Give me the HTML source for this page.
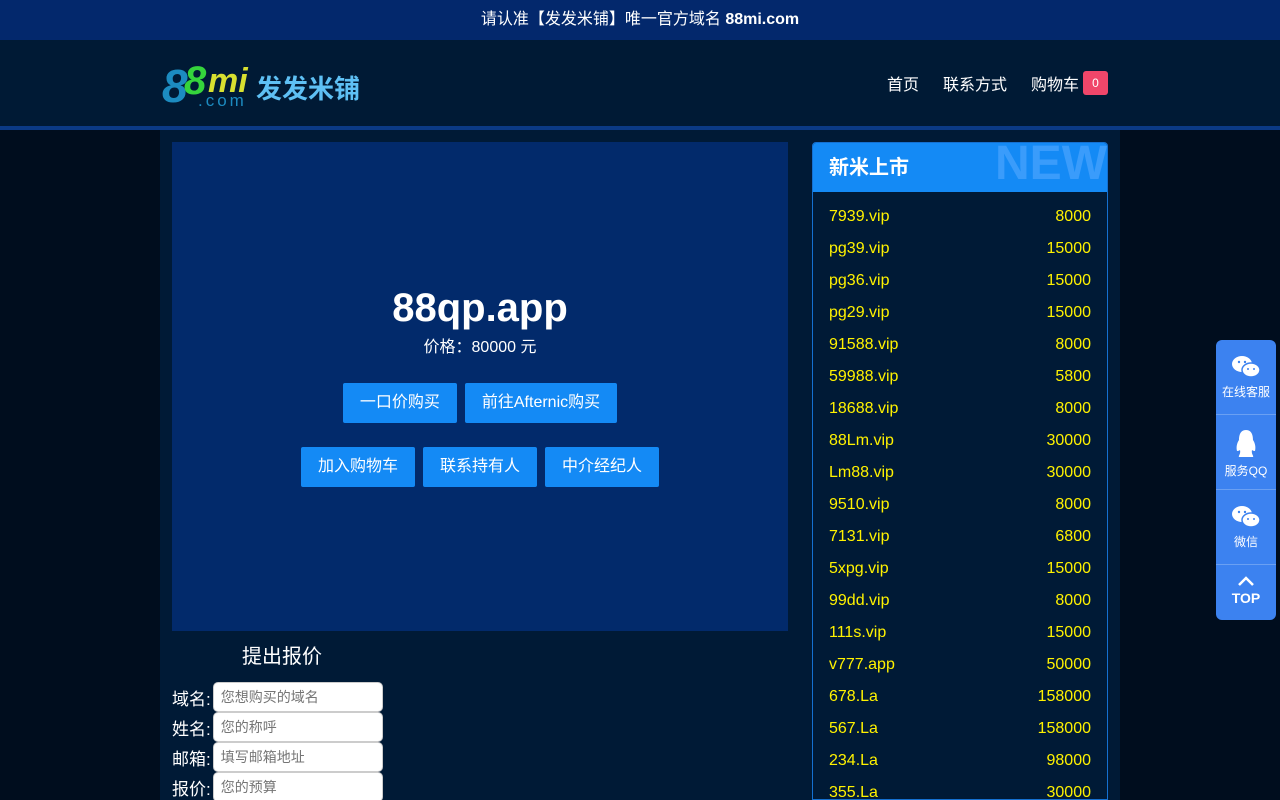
<!DOCTYPE html>
<html><head><meta charset="utf-8"><style>
*{margin:0;padding:0;box-sizing:border-box}
html,body{width:1280px;height:800px;overflow:hidden}
body{background:#000d1e;font-family:"Liberation Sans","Noto Sans CJK SC",sans-serif;color:#fff;position:relative}
.top{height:40px;background:#03286c;text-align:center;line-height:40px;font-size:16px}
.hdr{height:86px;background:#001a35;position:relative}
.line{height:4px;background:#0b3a85}
.logo{position:absolute;left:162px;top:18px}
.nav{position:absolute;right:172px;top:31px;font-size:16px;display:flex;align-items:center}
.nav span{margin-left:24px}
.nav .badge{display:inline-block;background:#f0466a;border-radius:3px;width:25px;height:24px;line-height:24px;text-align:center;font-size:12px;margin-left:4px}
.wrap{position:absolute;left:160px;top:130px;width:960px;height:670px;background:#001a36;overflow:hidden}
.hero{position:absolute;left:12px;top:12px;width:616px;height:489px;background:#022a6b;text-align:center}
.hero h1{font-size:40px;margin-top:143px;line-height:46px}
.hero .p{font-size:16px;margin-top:2px}
.btns{margin-top:26px}
.b{display:inline-block;background:#148af5;height:40px;line-height:40px;padding:0 17px;font-size:16px;border-radius:2px}
.form{position:absolute;left:12px;top:510px;font-size:17px}
.form h3{font-weight:normal;font-size:20px;margin-left:70px;margin-bottom:13px}
.row{display:flex;align-items:center;height:30px}
.row input{width:170px;height:30px;border:1px solid #ccc;border-radius:5px;padding-left:7px;font-size:14px;margin-left:2px;font-family:inherit}
.side{position:absolute;left:652px;top:12px;width:296px;height:658px;border:1px solid #1570d0;border-radius:4px 4px 0 0;overflow:hidden}
.sh{height:49px;background:#148af5;position:relative;font-size:20px;font-weight:bold;line-height:50px;padding-left:16px}
.sh i{position:absolute;right:0;top:-4px;font-style:normal;font-size:48px;color:#3a9cfb;line-height:50px}
.list{padding-top:9px}
.it{display:flex;justify-content:space-between;height:32px;line-height:32px;padding:0 16px;color:#fff200;font-size:16px}
.fl{position:absolute;left:1216px;top:340px;width:60px;height:280px;background:#3c82f0;border-radius:6px;text-align:center;font-size:12px}
.fl div{height:75px;border-bottom:1px solid #6aa0f3;padding-top:14px}
.fl div:last-child{border:none;height:55px;padding-top:10px}
</style></head><body>
<div class="top">请认准【发发米铺】唯一官方域名 <b>88mi.com</b></div>
<div class="hdr">
<div class="logo"><svg width="200" height="52"><text x="0" y="44" font-family="Liberation Sans" font-weight="bold" font-style="italic" font-size="46" fill="#1c8bc0">8</text><text x="22" y="36" font-family="Liberation Sans" font-weight="bold" font-style="italic" font-size="40" fill="#35d43c">8</text><text x="46" y="34" font-family="Liberation Sans" font-weight="bold" font-style="italic" font-size="34" fill="#d8e030">mi</text><text x="36" y="48" font-family="Liberation Sans" font-size="17" fill="#1c8bc0" letter-spacing="3">.com</text><text x="94" y="40" font-family="Noto Sans CJK SC" font-weight="bold" font-size="26" fill="#5ec0f4">发发米铺</text></svg></div>
<div class="nav"><span>首页</span><span>联系方式</span><span>购物车</span><span class="badge">0</span></div>
</div>
<div class="line"></div>
<div class="wrap">
<div class="hero"><h1>88qp.app</h1><div class="p">价格：80000 元</div>
<div class="btns"><span class="b" style="margin:0 4px 24px">一口价购买</span><span class="b" style="margin:0 4px 24px">前往Afternic购买</span><br><span class="b" style="margin:0 4px">加入购物车</span><span class="b" style="margin:0 4px">联系持有人</span><span class="b" style="margin:0 4px">中介经纪人</span></div></div>
<div class="form"><h3>提出报价</h3>
<div class="row">域名:<input placeholder="您想购买的域名"></div>
<div class="row">姓名:<input placeholder="您的称呼"></div>
<div class="row">邮箱:<input placeholder="填写邮箱地址"></div>
<div class="row">报价:<input placeholder="您的预算"></div></div>
<div class="side"><div class="sh">新米上市<i>NEW</i></div><div class="list">
<div class="it"><span>7939.vip</span><span>8000</span></div>
<div class="it"><span>pg39.vip</span><span>15000</span></div>
<div class="it"><span>pg36.vip</span><span>15000</span></div>
<div class="it"><span>pg29.vip</span><span>15000</span></div>
<div class="it"><span>91588.vip</span><span>8000</span></div>
<div class="it"><span>59988.vip</span><span>5800</span></div>
<div class="it"><span>18688.vip</span><span>8000</span></div>
<div class="it"><span>88Lm.vip</span><span>30000</span></div>
<div class="it"><span>Lm88.vip</span><span>30000</span></div>
<div class="it"><span>9510.vip</span><span>8000</span></div>
<div class="it"><span>7131.vip</span><span>6800</span></div>
<div class="it"><span>5xpg.vip</span><span>15000</span></div>
<div class="it"><span>99dd.vip</span><span>8000</span></div>
<div class="it"><span>111s.vip</span><span>15000</span></div>
<div class="it"><span>v777.app</span><span>50000</span></div>
<div class="it"><span>678.La</span><span>158000</span></div>
<div class="it"><span>567.La</span><span>158000</span></div>
<div class="it"><span>234.La</span><span>98000</span></div>
<div class="it"><span>355.La</span><span>30000</span></div>
</div></div>
</div>
<div class="fl">
<div><svg width="30" height="26" viewBox="0 0 30 26"><ellipse cx="11" cy="10" rx="10" ry="8" fill="#fff"/><ellipse cx="20" cy="16" rx="9" ry="7" fill="#fff" stroke="#3c82f0" stroke-width="1.5"/><circle cx="8" cy="8" r="1.2" fill="#3c82f0"/><circle cx="14" cy="8" r="1.2" fill="#3c82f0"/><circle cx="17" cy="15" r="1" fill="#3c82f0"/><circle cx="23" cy="15" r="1" fill="#3c82f0"/></svg><br>在线客服</div>
<div><svg width="26" height="30" viewBox="0 0 26 30"><path d="M13 1C7 1 6 7 6 11C4 14 3 18 4 22C6 22 7 21 7 21C8 25 5 27 6 28H20C21 27 18 25 19 21C19 21 20 22 22 22C23 18 22 14 20 11C20 7 19 1 13 1Z" fill="#fff"/></svg><br>服务QQ</div>
<div><svg width="30" height="26" viewBox="0 0 30 26"><ellipse cx="11" cy="10" rx="10" ry="8" fill="#fff"/><ellipse cx="20" cy="16" rx="9" ry="7" fill="#fff" stroke="#3c82f0" stroke-width="1.5"/><circle cx="8" cy="8" r="1.2" fill="#3c82f0"/><circle cx="14" cy="8" r="1.2" fill="#3c82f0"/><circle cx="17" cy="15" r="1" fill="#3c82f0"/><circle cx="23" cy="15" r="1" fill="#3c82f0"/></svg><br>微信</div>
<div><svg width="20" height="12" viewBox="0 0 20 12"><path d="M3 10L10 3L17 10" stroke="#fff" stroke-width="2.5" fill="none"/></svg><br><b style="font-size:14px">TOP</b></div>
</div>
</body></html>
